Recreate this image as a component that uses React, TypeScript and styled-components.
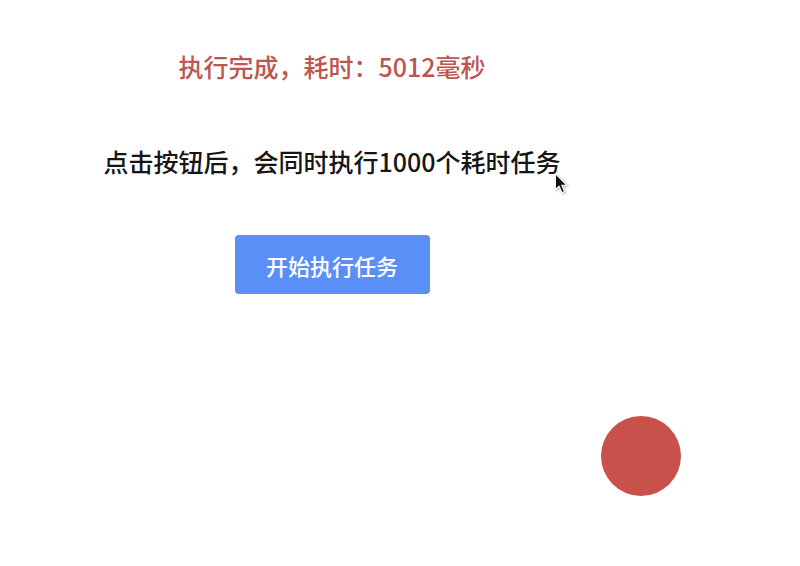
import * as React from "react";
import styled, { createGlobalStyle } from "styled-components";

const GlobalStyle = createGlobalStyle`
  html, body {
    margin: 0;
    padding: 0;
    background: #ffffff;
  }
  body {
    font-family: "Noto Sans CJK SC", "Noto Sans", sans-serif;
    width: 800px;
    height: 566px;
    overflow: hidden;
  }
`;

const App = () => {
  return (
    <Page>
      <GlobalStyle />
      <Column>
        <Result>执行完成，耗时：5012毫秒</Result>
        <Hint>点击按钮后，会同时执行1000个耗时任务</Hint>
        <RunButton>开始执行任务</RunButton>
      </Column>
      <Ball />
      <Cursor viewBox="0 0 16 24">
        <path
          d="M1.5 1.5 L1.5 18.5 L5.4 14.8 L8.4 21.8 L11.2 20.6 L8.3 13.8 L13.6 13.6 Z"
          fill="#111"
          stroke="#fff"
          strokeWidth="1.2"
          strokeLinejoin="round"
        />
      </Cursor>
    </Page>
  );
};

export default App;

const Page = styled.div`
  position: relative;
  width: 800px;
  height: 566px;
  background: #ffffff;
`;

const Column = styled.div`
  width: 664px;
  display: flex;
  flex-direction: column;
  align-items: center;
  padding-top: 48px;
`;

const Result = styled.p`
  margin: 0;
  font-size: 25px;
  font-weight: 500;
  line-height: 36px;
  color: #bd5550;
`;

const Hint = styled.p`
  margin: 59px 0 0;
  font-size: 25px;
  font-weight: 500;
  line-height: 36px;
  color: #161616;
`;

const RunButton = styled.button`
  margin-top: 56px;
  width: 195px;
  height: 59px;
  border: none;
  border-radius: 4px;
  background: #5a8ff7;
  color: #ffffff;
  font-family: "Noto Sans CJK SC", "Noto Sans", sans-serif;
  font-size: 22px;
  font-weight: 500;
  cursor: pointer;
`;

const Ball = styled.div`
  position: absolute;
  left: 601px;
  top: 416px;
  width: 80px;
  height: 80px;
  border-radius: 50%;
  background: #c9514b;
`;

const Cursor = styled.svg`
  position: absolute;
  left: 554px;
  top: 172px;
  width: 15px;
  height: 23px;
  filter: drop-shadow(1px 1px 1px rgba(0, 0, 0, 0.3));
`;
